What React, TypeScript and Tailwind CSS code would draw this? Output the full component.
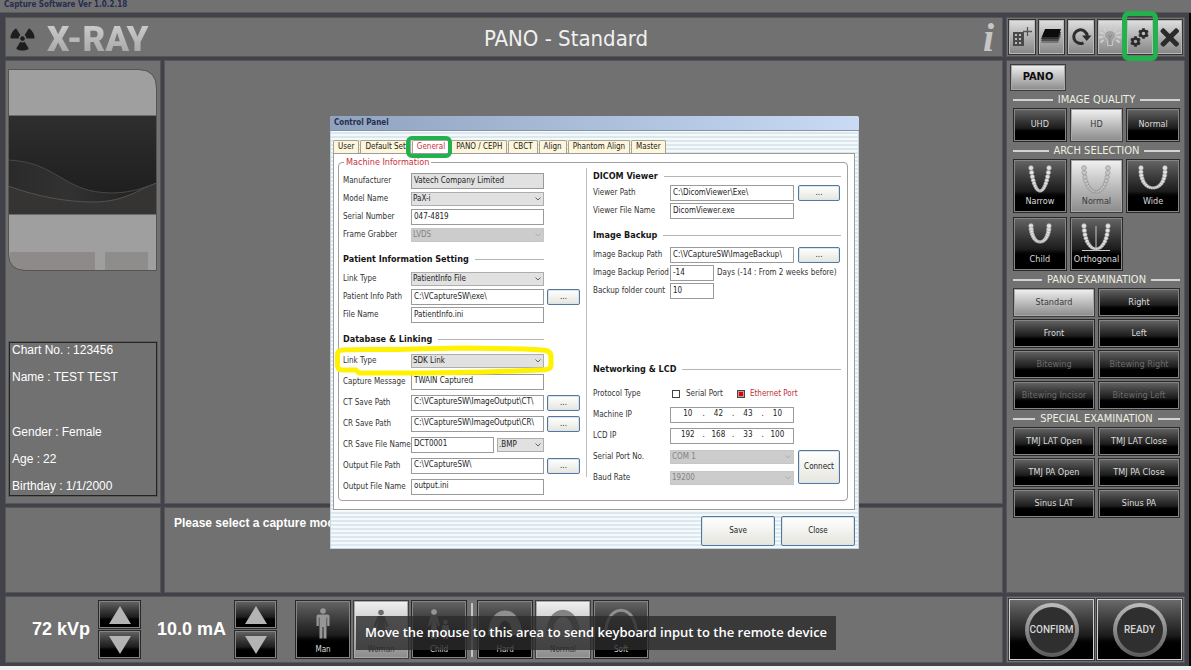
import { useState, type ReactNode } from "react";
import { FaCog, FaRadiation, FaTimes } from "react-icons/fa";

const FONT = "font-['DejaVu_Sans_Condensed','DejaVu_Sans',sans-serif]";
const PANEL = "bg-[#717171] border border-[#565658]";
const DARK =
  "border border-[#292929] shadow-[inset_0_0_0_1px_#858585] bg-linear-to-b from-[#666666] via-[#1c1c1c] via-60% to-black to-75% text-[#dcdcdc]";
const LIGHT =
  "border border-[#3c3c3c] shadow-[inset_0_0_0_1px_#a8a8a8] bg-linear-to-b from-[#f2f2f2] to-[#8b8b8b] text-[#3a3a3a]";

/* ---------- arch drawings ---------- */

type ArchShape = { w: number; h: number; c: number };

function Teeth({ w, h, c, light, cross }: ArchShape & { light?: boolean; cross?: boolean }) {
  const n = 20;
  const teeth = Array.from({ length: n }, (_, i) => {
    const t = i / (n - 1);
    const u = 1 - t;
    const x = -w * u * u * u - 3 * w * c * u * u * t + 3 * w * c * u * t * t + w * t * t * t;
    const y = 3 * u * t * h * 1.33;
    const r = 1.3 + Math.abs(t - 0.5) * 2.2;
    return { x: x + 18, y: y + 3, r };
  });
  return (
    <svg width="36" height="30" viewBox="0 0 36 30" aria-hidden="true">
      {cross && <path d="M18 3V27M4 27.5H32" stroke="#c8c8c8" strokeWidth="1" />}
      {teeth.map((p, i) => (
        <circle
          key={i}
          cx={p.x}
          cy={p.y}
          r={p.r}
          fill={light ? "#c6c6c6" : "#e2e2e2"}
          stroke={light ? "#808080" : "#8e8e8e"}
          strokeWidth="0.5"
        />
      ))}
    </svg>
  );
}

/* ---------- toolbar drawings ---------- */

function NewPatientIcon() {
  return (
    <svg width="22" height="24" viewBox="0 0 22 24" aria-hidden="true">
      <path d="M2 7h11v14H2z" fill="#4a4a4a" />
      <g fill="#b9b9b9">
        <path d="M4 9h2v2H4zM8 9h2v2H8zM4 13h2v2H4zM8 13h2v2H8zM4 17h2v2H4zM8 17h2v2H8z" />
      </g>
      <path d="M16.500 2v9M12 6.500h9" stroke="#555" strokeWidth="1.300" />
    </svg>
  );
}

function StackIcon() {
  return (
    <svg width="22" height="24" viewBox="0 0 22 24" aria-hidden="true">
      <path d="M4 11h17l-3 7H1z" fill="#777" />
      <path d="M4 9h17l-3 7H1z" fill="#4c4c4c" />
      <path d="M4 7h17l-3 7H1z" fill="#303030" />
      <path d="M5 4h16l-3 8H2z" fill="#0c0c0c" />
    </svg>
  );
}

function RefreshIcon() {
  return (
    <svg width="22" height="24" viewBox="0 0 22 24" aria-hidden="true">
      <path d="M13.500 17.800A6.800 6.800 0 1 1 17.300 11" fill="none" stroke="#2e2e2e" strokeWidth="3" />
      <path d="M12 10.500h9.500l-4.700 5.500z" fill="#2e2e2e" />
    </svg>
  );
}

function BulbIcon() {
  return (
    <svg width="22" height="24" viewBox="0 0 22 24" aria-hidden="true">
      <path
        d="M2 17L4 15.500M0.500 12.500L3.500 12M1.500 7.500L4 8.500M5 3.500L6.500 6M11 2V4.500M17 3.500L15.500 6M20.500 7.500L18 8.500M21.500 12.500L18.500 12M20 17L18 15.500"
        stroke="#cfcfcf"
        strokeWidth="1.800"
        strokeLinecap="round"
      />
      <path
        d="M11 5.500c-3.500 0-5.500 2.500-5.500 5 0 3 2.800 3.600 3 6.500v3.500h5v-3.500c.3-3 3-3.500 3-6.500 0-2.500-2-5-5.500-5z"
        fill="#a2a2a2"
        stroke="#cfcfcf"
        strokeWidth="0.800"
      />
      <path d="M11 20V12l-2-2m2 2l2-2" stroke="#858585" fill="none" />
    </svg>
  );
}

function GearsIcon() {
  return (
    <span className="flex items-center" aria-hidden="true">
      <FaCog size={11} color="#2b2b2b" className="-mr-[3px] mt-2" />
      <FaCog size={11} color="#2b2b2b" className="mb-2" />
    </span>
  );
}

/* ---------- bottom bar drawings ---------- */

const Adult = () => (
  <g>
    <circle cx="20" cy="6" r="2.800" />
    <path d="M15.500 9.500h9q2 0 2 2v9.500h-2.300v-8.500h-.7v21h-3v-11.500h-1v11.500h-3v-21h-.7v8.500h-2.300v-9.500q0-2 2-2z" />
  </g>
);

function PersonIcon({ kind, light }: { kind: string; light?: boolean }) {
  return (
    <svg width="40" height="36" viewBox="0 0 40 36" fill={light ? "#6c6c6c" : "#969696"} aria-hidden="true">
      {kind === "Man" && <Adult />}
      {kind === "Woman" && (
        <g>
          <circle cx="20" cy="7.500" r="2.800" />
          <path d="M16.500 11h7l4 10-2 1-2.500-6 2.500 11h-3v7h-2v-7h-1v7h-2v-7h-3l2.500-11-2.500 6-2-1z" />
        </g>
      )}
      {kind === "Child" && (
        <g>
          <circle cx="15" cy="7" r="2.800" />
          <path d="M11.500 11h7l2.500 10h-2l-1.500-6 .5 12v7h-2.500v-8h-1v8H12v-8l.500-11-1.500 6H9z" />
          <circle cx="26.500" cy="17" r="2.200" />
          <path d="M23.500 20h6l1 7h-1.500v7h-2v-5h-1v5h-2v-7h-1.500z" />
        </g>
      )}
    </svg>
  );
}

function HeadArcIcon({ width, light }: { width: number; light?: boolean }) {
  return (
    <svg width="40" height="36" viewBox="0 0 40 36" aria-hidden="true">
      <path
        d={`M${3 + width / 2} 30C${3 + width / 2} ${-6 + width} ${37 - width / 2} ${-6 + width} ${37 - width / 2} 30`}
        fill="none"
        stroke={light ? "#838383" : "#8f8f8f"}
        strokeWidth={width}
      />
    </svg>
  );
}

/* ---------- main window parts ---------- */

function SectionLabel({ children }: { children: ReactNode }) {
  return (
    <h2 className="flex h-[17px] items-center gap-[5px] text-[11px] leading-4 whitespace-nowrap text-[#efefe2]">
      <span className="h-[2px] flex-1 bg-[#d2d2d2]" />
      {children}
      <span className="h-[2px] flex-1 bg-[#d2d2d2]" />
    </h2>
  );
}

function Key({ children, on, off, tall }: { children: ReactNode; on?: boolean; off?: boolean; tall?: boolean }) {
  return (
    <button
      type="button"
      disabled={off}
      className={`${on ? LIGHT : DARK} ${tall ? "h-[34px]" : "h-[29px]"} text-[9px] whitespace-nowrap disabled:text-[#6c6c6c]`}
    >
      {children}
    </button>
  );
}

function ArchKey({ label, on, cross, ...shape }: ArchShape & { label: string; on?: boolean; cross?: boolean }) {
  return (
    <button
      type="button"
      className={`${on ? LIGHT : DARK} flex h-[54px] flex-col items-center justify-end pb-[5px] text-[9px] leading-[12px]`}
    >
      <Teeth {...shape} light={on} cross={cross} />
      {label}
    </button>
  );
}

function Stepper({ label, name }: { label: string; name: string }) {
  return (
    <div className="flex items-center gap-2">
      <output className="text-[18px] font-bold whitespace-nowrap text-white font-['Liberation_Sans',Arial,sans-serif]">
        {label}
      </output>
      <div className="flex flex-col gap-[1px]">
        <button type="button" aria-label={`Increase ${name}`} className={`${DARK} flex h-[29px] w-[43px] items-center justify-center`}>
          <svg width="24" height="20" viewBox="0 0 24 20" aria-hidden="true">
            <path d="M12 1L23 19H1z" fill="#b4b4b4" />
          </svg>
        </button>
        <button type="button" aria-label={`Decrease ${name}`} className={`${DARK} flex h-[29px] w-[43px] items-center justify-center`}>
          <svg width="24" height="20" viewBox="0 0 24 20" aria-hidden="true">
            <path d="M12 19L23 1H1z" fill="#b4b4b4" />
          </svg>
        </button>
      </div>
    </div>
  );
}

function PictureKey({ label, on, children }: { label: string; on?: boolean; children: ReactNode }) {
  return (
    <button
      type="button"
      className={`${on ? LIGHT : DARK} flex h-[59px] w-14 flex-col items-center justify-end gap-1 pb-[3px] text-[8px] leading-[10px]`}
    >
      {children}
      {label}
    </button>
  );
}

function RoundKey({ children }: { children: string }) {
  return (
    <button
      type="button"
      className="flex flex-1 items-center justify-center border border-[#d0d0d0] bg-linear-to-b from-[#6a6a6a] via-[#1c1c1c] via-60% to-black to-80% outline outline-[#3a3a3a]"
    >
      <span className="flex size-[54px] items-center justify-center rounded-full bg-linear-to-b from-[#bdbdbd] to-[#5a5a5a]">
        <span className="flex size-[46px] items-center justify-center rounded-full bg-[#302f30] text-[10px] font-medium text-[#d6d6d6] font-['Roboto',sans-serif]">
          {children}
        </span>
      </span>
    </button>
  );
}

/* ---------- control panel parts ---------- */

const BOX = "h-4 w-full min-w-0 border border-[#9a9a9a] text-[8px] leading-[12px] text-[#1c1c1c] outline-none";
const SILVER =
  "rounded-[2px] border border-[#54789c] bg-linear-to-b from-white to-[#e6e6de] text-[8px] text-[#222] shadow-[inset_0_0_0_1px_#dbe4ec]";

function Heading({ children, first }: { children: ReactNode; first?: boolean }) {
  return (
    <h3
      className={`flex items-center gap-[6px] text-[9px] leading-[12px] font-bold whitespace-nowrap text-[#161616] ${
        first ? "h-4" : "h-[26px] pt-[4px]"
      }`}
    >
      {children}
      <span className="h-px flex-1 bg-[#b4b4b4]" />
    </h3>
  );
}

type RowProps = {
  id: string;
  label: string;
  side?: "left" | "right";
  loose?: boolean;
  browse?: boolean;
  plain?: boolean;
  children: ReactNode;
};

function Row({ id, label, side = "left", loose, browse, plain, children }: RowProps) {
  const left = side === "left";
  return (
    <div className={`flex items-center ${loose ? "h-[21px]" : "h-[18px]"}`}>
      <label
        htmlFor={plain ? undefined : id}
        className={`${left ? "w-[68px]" : "w-[77px]"} shrink-0 text-[8px] leading-[12px] whitespace-nowrap text-[#333]`}
      >
        {label}
      </label>
      <div className={`${left ? "w-[133px]" : "w-[124px]"} flex shrink-0 gap-[3px]`}>{children}</div>
      {browse && (
        <button
          type="button"
          aria-label={`Browse ${label}`}
          className={`${SILVER} h-4 ${left ? "ml-[3px] w-[33px]" : "ml-1 w-[42px]"}`}
        >
          ...
        </button>
      )}
    </div>
  );
}

function Text({ id, value, grey }: { id: string; value: string; grey?: boolean }) {
  return (
    <input id={id} defaultValue={value} readOnly={grey} className={`${BOX} px-[2px] pb-[2px] ${grey ? "bg-[#e1e1e1]" : "bg-white"}`} />
  );
}

function Pick({ id, value, off, name }: { id: string; value: string; off?: boolean; name?: string }) {
  return (
    <span className="relative flex w-full">
      <select
        id={id}
        disabled={off}
        aria-label={name}
        defaultValue={value}
        className="h-[14px] w-full appearance-none border border-[#adadad] bg-[#e1e1e1] px-[1px] text-[8px] leading-[12px] text-[#1c1c1c] outline-none disabled:border-[#c6c6c6] disabled:bg-[#cccccc] disabled:text-[#838383] disabled:opacity-100"
      >
        <option>{value}</option>
      </select>
      <svg className="pointer-events-none absolute top-1 right-[3px]" width="6" height="6" viewBox="0 0 6 6" aria-hidden="true">
        <path d="M0.500 1.500L3 4L5.500 1.500" fill="none" stroke={off ? "#aaa" : "#555"} strokeWidth="0.900" />
      </svg>
    </span>
  );
}

function Address({ id, label, parts }: { id: string; label: string; parts: string[] }) {
  return (
    <div className="flex h-4 w-full items-center border border-[#9a9a9a] bg-white px-[2px] pb-[2px] text-[8px] leading-[12px] text-[#1c1c1c]">
      {parts.map((p, i) => (
        <span key={i} className="flex min-w-0 flex-1 items-center">
          {i > 0 && <span>.</span>}
          <input
            id={i === 0 ? id : undefined}
            aria-label={`${label} part ${i + 1}`}
            defaultValue={p}
            className="w-full min-w-0 bg-transparent text-center outline-none"
          />
        </span>
      ))}
    </div>
  );
}

const TABS = ["User", "Default Set", "General", "PANO / CEPH", "CBCT", "Align", "Phantom Align", "Master"];

function ControlPanel() {
  const [tab, setTab] = useState("General");
  return (
    <section
      role="dialog"
      aria-label="Control Panel"
      className="absolute top-[116px] left-[330px] flex w-[529px] flex-col rounded-t-[3px] bg-[repeating-linear-gradient(180deg,#dce8ee_0_2px,#f4f9fb_2px_4px)] shadow-[inset_0_0_0_1px_#c4d2de]"
    >
      <h2 className="h-[15px] rounded-t-[3px] border-b border-[#8793a5] bg-linear-to-r from-[#8fa3c0] to-[#c8daf4] px-1 text-[8px] leading-[14px] font-bold text-[#27304a]">
        Control Panel
      </h2>
      <div role="tablist" className="mt-[9px] ml-[3px] flex gap-px">
        {TABS.map((t) => (
          <button
            key={t}
            type="button"
            role="tab"
            aria-selected={t === tab}
            onClick={() => setTab(t)}
            className={`relative h-[13px] rounded-t-[2px] border border-b-0 border-[#a8a391] px-1 text-[8px] leading-[12px] whitespace-nowrap ${
              t === tab ? "bg-white text-[#c8303c]" : "bg-[#fdf6da] text-[#222]"
            }`}
          >
            {t}
            {t === "General" && (
              <span className="pointer-events-none absolute -top-[5px] -right-[3px] -left-[7px] z-10 h-[22px] rounded-[6px] border-4 border-[#22b14c]" />
            )}
          </button>
        ))}
      </div>
      <div className="mr-1 ml-[3px] border border-[#9c9c9c] bg-white pt-[2px] pr-[6px] pb-2 pl-1">
        <fieldset className="rounded-[4px] border border-[#a0a0a0] pr-[6px] pb-[3px] pl-1">
          <legend className="ml-[1px] px-[2px] text-[9px] leading-[12px] text-[#c8303c]">Machine Information</legend>
          <div className="flex items-start">
            <div className="w-[237px] pt-1">
              <Row id="maker" label="Manufacturer"><Text id="maker" value="Vatech Company Limited" grey /></Row>
              <Row id="model" label="Model Name"><Pick id="model" value="PaX-i" /></Row>
              <Row id="serial" label="Serial Number"><Text id="serial" value="047-4819" /></Row>
              <Row id="grabber" label="Frame Grabber"><Pick id="grabber" value="LVDS" off /></Row>
              <div className="mr-9"><Heading>Patient Information Setting</Heading></div>
              <Row id="plink" label="Link Type"><Pick id="plink" value="PatientInfo File" /></Row>
              <Row id="ppath" label="Patient Info Path" browse><Text id="ppath" value="C:\VCaptureSW\exe\" /></Row>
              <Row id="pfile" label="File Name"><Text id="pfile" value="PatientInfo.ini" /></Row>
              <div className="mr-9"><Heading>Database &amp; Linking</Heading></div>
              <div className="relative">
                <Row id="dlink" label="Link Type" loose><Pick id="dlink" value="SDK Link" /></Row>
                <svg
                  className="pointer-events-none absolute -top-[5px] -left-[9px] z-10"
                  width="222"
                  height="32"
                  viewBox="0 0 222 32"
                  aria-hidden="true"
                >
                  <path
                    d="M7 5C30 4 50 5 80 4L130 3L190 4L208 5C215 5 217 8 217 12V20C217 24 214 25 205 25L150 27L90 28L25 28L22 25L8 25C4 25 3 22 3.500 17V9C3.500 6 5 5 10 5"
                    fill="none"
                    stroke="#fff200"
                    strokeWidth="5"
                    strokeLinejoin="round"
                  />
                </svg>
              </div>
              <Row id="msg" label="Capture Message" loose><Text id="msg" value="TWAIN Captured" /></Row>
              <Row id="ct" label="CT Save Path" loose browse><Text id="ct" value="C:\VCaptureSW\ImageOutput\CT\" /></Row>
              <Row id="cr" label="CR Save Path" loose browse><Text id="cr" value="C:\VCaptureSW\ImageOutput\CR\" /></Row>
              <Row id="crname" label="CR Save File Name" loose>
                <span className="flex w-[83px] shrink-0"><Text id="crname" value="DCT0001" /></span>
                <span className="flex flex-1 items-center"><Pick id="format" name="File format" value=".BMP" /></span>
              </Row>
              <Row id="opath" label="Output File Path" loose browse><Text id="opath" value="C:\VCaptureSW\" /></Row>
              <Row id="oname" label="Output File Name" loose><Text id="oname" value="output.ini" /></Row>
            </div>
            <div className="mr-[6px] mb-5 ml-[6px] w-px self-stretch bg-[#bdbdbd]" />
            <div className="min-w-0 flex-1">
              <Heading first>DICOM Viewer</Heading>
              <Row side="right" id="vpath" label="Viewer Path" browse><Text id="vpath" value="C:\DicomViewer\Exe\" /></Row>
              <Row side="right" id="vfile" label="Viewer File Name"><Text id="vfile" value="DicomViewer.exe" /></Row>
              <Heading>Image Backup</Heading>
              <Row side="right" id="bpath" label="Image Backup Path" browse><Text id="bpath" value="C:\VCaptureSW\ImageBackup\" /></Row>
              <Row side="right" id="period" label="Image Backup Period">
                <span className="flex w-11 shrink-0"><Text id="period" value="-14" /></span>
                <span className="text-[8px] leading-4 whitespace-nowrap text-[#333]">Days (-14 : From 2 weeks before)</span>
              </Row>
              <Row side="right" id="count" label="Backup folder count">
                <span className="flex w-11 shrink-0"><Text id="count" value="10" /></span>
              </Row>
              <div className="mt-[54px] mb-[3px]"><Heading>Networking &amp; LCD</Heading></div>
              <Row side="right" id="protocol" label="Protocol Type" loose plain>
                <label className="flex w-16 shrink-0 items-center gap-[6px] pl-[2px] text-[8px] leading-[12px] whitespace-nowrap text-[#333]">
                  <input type="checkbox" className="size-2 appearance-none border border-[#444] bg-white checked:bg-[#e00000]" />
                  Serial Port
                </label>
                <label className="flex shrink-0 items-center gap-[5px] text-[8px] leading-[12px] whitespace-nowrap text-[#c03038]">
                  <input
                    type="checkbox"
                    defaultChecked
                    className="size-2 appearance-none border border-[#444] bg-white checked:bg-[#e00000] checked:shadow-[inset_0_0_0_1px_#c89a9a]"
                  />
                  Ethernet Port
                </label>
              </Row>
              <Row side="right" id="mip" label="Machine IP" loose><Address id="mip" label="Machine IP" parts={["10", "42", "43", "10"]} /></Row>
              <Row side="right" id="lip" label="LCD IP" loose><Address id="lip" label="LCD IP" parts={["192", "168", "33", "100"]} /></Row>
              <div className="flex items-center gap-1">
                <div>
                  <Row side="right" id="com" label="Serial Port No." loose><Pick id="com" value="COM 1" off /></Row>
                  <Row side="right" id="baud" label="Baud Rate" loose><Pick id="baud" value="19200" off /></Row>
                </div>
                <button type="button" className={`${SILVER} h-[34px] w-[42px]`}>Connect</button>
              </div>
            </div>
          </div>
        </fieldset>
      </div>
      <div className="flex justify-end gap-[6px] pt-[6px] pr-1 pb-[3px]">
        <button type="button" className={`${SILVER} h-[30px] w-[74px]`}>Save</button>
        <button type="button" className={`${SILVER} h-[30px] w-[74px]`}>Close</button>
      </div>
    </section>
  );
}

/* ---------- application ---------- */

const TOOLS: { name: string; icon: ReactNode }[] = [
  { name: "New patient", icon: <NewPatientIcon /> },
  { name: "Image list", icon: <StackIcon /> },
  { name: "Refresh", icon: <RefreshIcon /> },
  { name: "Lamp", icon: <BulbIcon /> },
  { name: "Settings", icon: <GearsIcon /> },
  { name: "Exit", icon: <FaTimes size={27} color="#2b2b2b" /> },
];

export default function App() {
  return (
    <div className={`relative flex min-h-screen w-full flex-col bg-[#f0f0f0] pb-1 ${FONT}`}>
      <header className="h-[13px] border-b border-[#5a5a5e] bg-[#717171] px-1 text-[8px] leading-[10px] font-bold text-[#262c52]">
        Capture Software Ver 1.0.2.18
      </header>
      <div className="flex flex-1 gap-[3px] border-r-2 border-black bg-[#42424a] pt-1 pr-1 pb-[3px] pl-[5px]">
        <main className="flex min-w-0 flex-1 flex-col gap-[3px]">
          <div className={`${PANEL} grid h-10 grid-cols-[1fr_auto_1fr] items-center pr-2 pl-1`}>
            <div className="flex items-center gap-3">
              <FaRadiation size={25} color="#1d1d1d" aria-hidden="true" />
              <span className="bg-linear-to-b from-[#d4d4d4] to-[#a2a2a2] bg-clip-text pt-1 text-[35px] leading-[36px] font-black text-transparent font-['Roboto','DejaVu_Sans_Condensed',sans-serif]">
                X-RAY
              </span>
            </div>
            <h1 className="pt-[2px] pl-32 text-[22px] leading-[28px] text-[#f0f0f0]">PANO - Standard</h1>
            <button
              type="button"
              aria-label="Information"
              className="justify-self-end text-[40px] leading-[36px] font-bold text-[#c6c6c6] italic font-['Liberation_Serif',serif]"
            >
              i
            </button>
          </div>
          <div className="flex min-h-[444px] flex-1 gap-[3px]">
            <aside className={`${PANEL} flex w-[156px] flex-col justify-between px-[2px] pt-2 pb-[7px]`}>
              <svg viewBox="0 0 149 202" className="h-[202px] w-[149px]" role="img" aria-label="Waiting screen">
                <defs>
                  <clipPath id="card"><path d="M1 1H131Q148 1 148 19V201H17Q1 201 1 185Z" /></clipPath>
                  <linearGradient id="night" x1="0" y1="0" x2="0" y2="1">
                    <stop offset="0" stopColor="#2e2e2e" />
                    <stop offset="1" stopColor="#1b1b1b" />
                  </linearGradient>
                  <linearGradient id="wave" x1="0" y1="0" x2="1" y2="0">
                    <stop offset="0" stopColor="#2a2a2a" />
                    <stop offset="0.400" stopColor="#323232" />
                    <stop offset="1" stopColor="#1d1d1d" />
                  </linearGradient>
                </defs>
                <g clipPath="url(#card)">
                  <path d="M0 0H149V202H0Z" fill="#9f9f9f" />
                  <path d="M0 47H149V145H0Z" fill="url(#night)" />
                  <path d="M0 91C50 93 55 124 104 124C125 124 140 117 149 114V145H0Z" fill="url(#wave)" />
                  <path d="M0 91C50 93 55 124 104 124C125 124 140 117 149 114" fill="none" stroke="#484848" />
                  <path d="M0 117C30 128 60 133 85 133C118 133 132 119 149 114V145H0Z" fill="#353433" />
                  <path d="M0 117C30 128 60 133 85 133C118 133 132 119 149 114" fill="none" stroke="#535353" />
                  <path d="M0 46.500H149M0 145.500H149" stroke="#6c6c6c" />
                  <path d="M2 183H87V201H2Z" fill="#8d8a89" />
                  <path d="M97 183H140V201H97Z" fill="#8f8d8b" />
                </g>
                <path d="M0.500 0.500H131Q148.500 1 148.500 19V201.500H17Q0.500 201 0.500 185Z" fill="none" stroke="#555" />
              </svg>
              <dl className="mx-[1px] flex flex-col border border-[#242424] px-[2px] text-[12px] leading-[14px] text-white outline outline-[#5c5c5c] font-['Liberation_Sans',Arial,sans-serif]">
                <div className="flex h-[27px] gap-[3px]"><dt>Chart No. :</dt><dd>123456</dd></div>
                <div className="flex h-[27px] gap-[3px]"><dt>Name :</dt><dd>TEST TEST</dd></div>
                <div className="h-7" />
                <div className="flex h-[27px] gap-[3px]"><dt>Gender :</dt><dd>Female</dd></div>
                <div className="flex h-[27px] gap-[3px]"><dt>Age :</dt><dd>22</dd></div>
                <div className="flex h-4 gap-[3px]"><dt>Birthday :</dt><dd>1/1/2000</dd></div>
              </dl>
            </aside>
            <div className={`${PANEL} min-w-0 flex-1`} />
          </div>
          <div className="flex h-[86px] gap-[3px]">
            <div className={`${PANEL} w-[156px]`} />
            <div className={`${PANEL} min-w-0 flex-1 px-[9px] py-2 text-[12px] leading-[14px] font-bold text-white font-['Liberation_Sans',Arial,sans-serif]`}>
              Please select a capture mode.
            </div>
          </div>
          <div className={`${PANEL} flex h-[67px] items-center pl-[26px]`}>
            <Stepper label="72 kVp" name="voltage" />
            <div className="ml-4"><Stepper label="10.0 mA" name="current" /></div>
            <div className="ml-[18px] flex items-center gap-[2px]">
              <PictureKey label="Man"><PersonIcon kind="Man" /></PictureKey>
              <PictureKey label="Woman" on><PersonIcon kind="Woman" light /></PictureKey>
              <PictureKey label="Child"><PersonIcon kind="Child" /></PictureKey>
              <span className="mx-[2px] h-[54px] w-[2px] bg-[#c4c4c4]" />
              <PictureKey label="Hard"><HeadArcIcon width={10} /></PictureKey>
              <PictureKey label="Normal" on><HeadArcIcon width={7} light /></PictureKey>
              <PictureKey label="Soft"><HeadArcIcon width={3} /></PictureKey>
            </div>
          </div>
        </main>

        <aside className="flex w-[179px] shrink-0 flex-col gap-[3px]">
          <div className={`${PANEL} grid h-10 grid-cols-6 gap-[2px] p-[1px]`}>
            {TOOLS.map((tool) => (
              <button
                key={tool.name}
                type="button"
                aria-label={tool.name}
                className="relative flex items-center justify-center border border-[#343434] bg-linear-to-b from-[#e0e0e0] to-[#858585] shadow-[inset_0_0_0_1px_#b8b8b8]"
              >
                {tool.icon}
                {tool.name === "Settings" && (
                  <span className="pointer-events-none absolute -inset-x-[5px] -top-[9px] -bottom-[7px] z-10 rounded-[7px] border-[5px] border-[#22b14c]" />
                )}
              </button>
            ))}
          </div>
          <div className={`${PANEL} flex flex-1 flex-col pt-[3px] pr-1 pl-[6px]`}>
            <button type="button" className={`${LIGHT} -ml-[3px] h-[27px] w-14 self-start text-[11px] font-bold`}>
              <span className="text-[#0c0c0c]">PANO</span>
            </button>
            <SectionLabel>IMAGE QUALITY</SectionLabel>
            <div className="grid grid-cols-3 gap-[3px]">
              <Key tall>UHD</Key>
              <Key tall on>HD</Key>
              <Key tall>Normal</Key>
            </div>
            <SectionLabel>ARCH SELECTION</SectionLabel>
            <div className="grid grid-cols-3 gap-x-[3px] gap-y-1">
              <ArchKey label="Narrow" w={9} h={23} c={0.6} />
              <ArchKey label="Normal" w={12} h={24} c={0.95} on />
              <ArchKey label="Wide" w={12} h={20} c={1.15} />
              <ArchKey label="Child" w={9} h={16} c={0.95} />
              <ArchKey label="Orthogonal" w={12} h={23} c={0.9} cross />
            </div>
            <SectionLabel>PANO EXAMINATION</SectionLabel>
            <div className="grid grid-cols-2 gap-x-[3px] gap-y-[2px]">
              <Key on>Standard</Key>
              <Key>Right</Key>
              <Key>Front</Key>
              <Key>Left</Key>
              <Key off>Bitewing</Key>
              <Key off>Bitewing Right</Key>
              <Key off>Bitewing Incisor</Key>
              <Key off>Bitewing Left</Key>
            </div>
            <SectionLabel>SPECIAL EXAMINATION</SectionLabel>
            <div className="grid grid-cols-2 gap-x-[3px] gap-y-[2px]">
              <Key>TMJ LAT Open</Key>
              <Key>TMJ LAT Close</Key>
              <Key>TMJ PA Open</Key>
              <Key>TMJ PA Close</Key>
              <Key>Sinus LAT</Key>
              <Key>Sinus PA</Key>
            </div>
          </div>
          <div className={`${PANEL} flex h-[67px] gap-[3px] p-[2px]`}>
            <RoundKey>CONFIRM</RoundKey>
            <RoundKey>READY</RoundKey>
          </div>
        </aside>
      </div>

      <ControlPanel />

      <p className="absolute bottom-5 left-[356px] flex h-[34px] items-center bg-[#2c2c2c]/80 px-[9px] text-[13px] font-semibold whitespace-nowrap text-white font-['Open_Sans','Noto_Sans',sans-serif]">
        Move the mouse to this area to send keyboard input to the remote device
      </p>
    </div>
  );
}
